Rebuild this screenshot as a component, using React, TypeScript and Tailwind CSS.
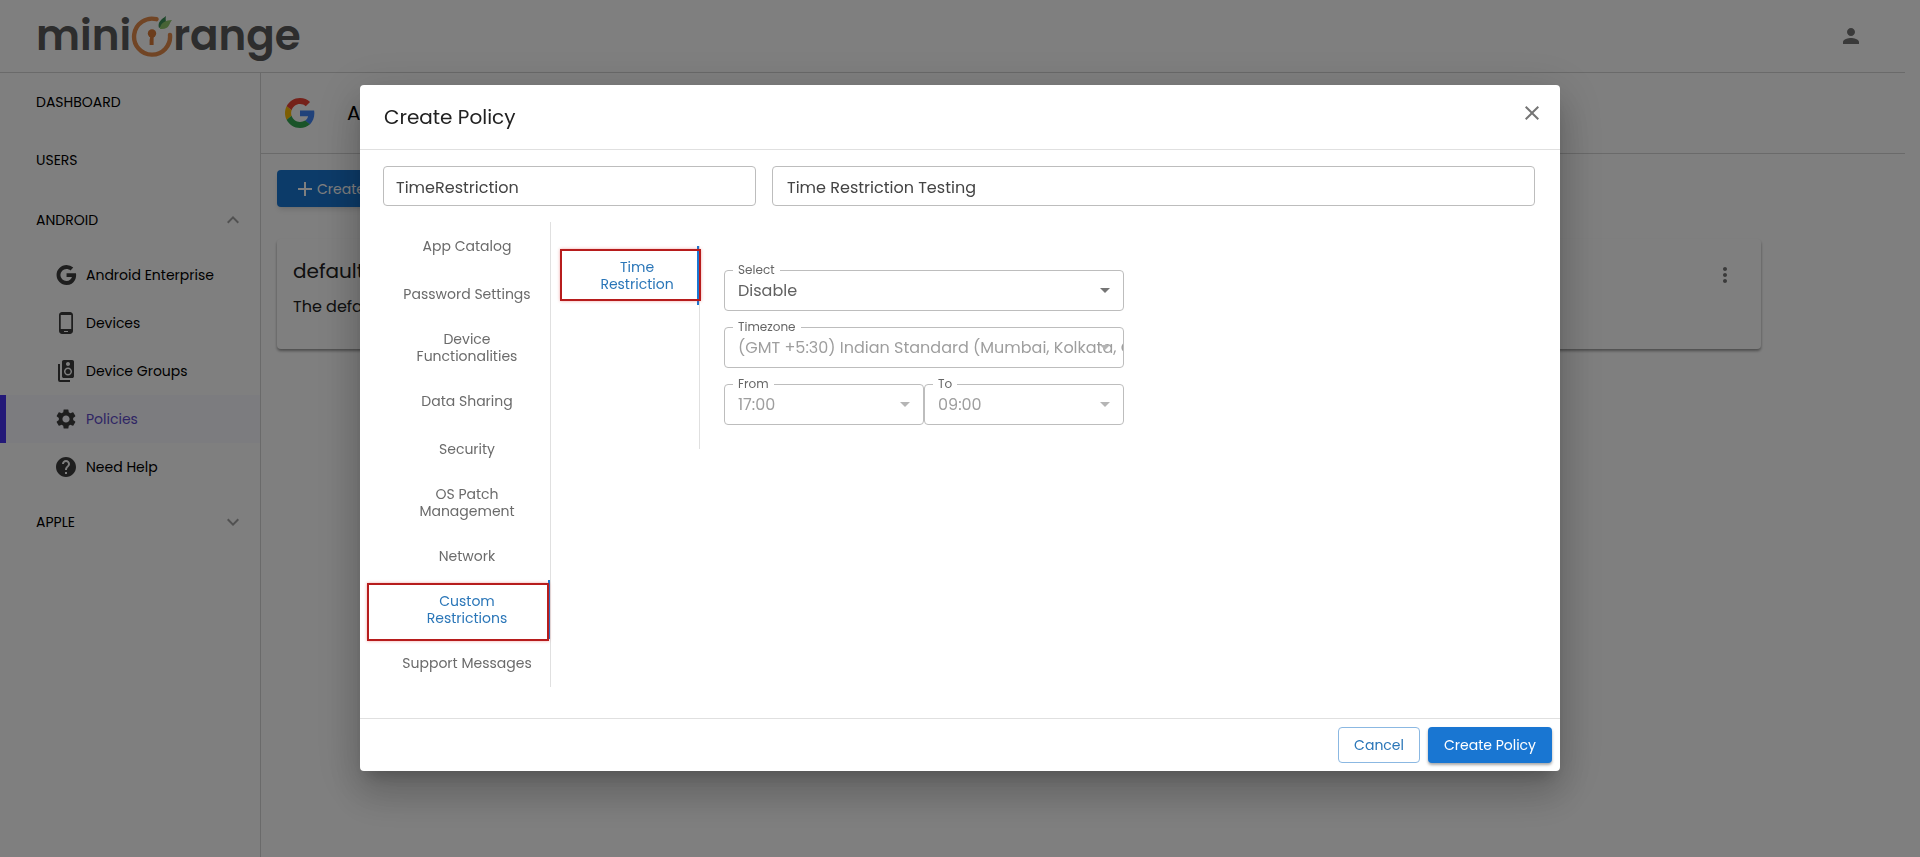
import {
  MdAdd,
  MdArrowDropDown,
  MdClose,
  MdExpandLess,
  MdExpandMore,
  MdHelp,
  MdMoreVert,
  MdPerson,
  MdPhoneAndroid,
  MdSettings,
  MdSpeakerGroup,
} from 'react-icons/md';

function GoogleIcon({ className }: { className?: string }) {
  return (
    <svg viewBox="0 0 24 24" fill="currentColor" className={className}>
      <path d="M12.545 10.239v3.821h5.445c-.712 2.315-2.647 3.972-5.445 3.972a6.033 6.033 0 1 1 0-12.064c1.498 0 2.866.549 3.921 1.453l2.814-2.814A9.969 9.969 0 0 0 12.545 2C7.021 2 2.543 6.477 2.543 12s4.478 10 10.002 10c8.396 0 10.249-7.85 9.426-11.748l-9.426-.013z" />
    </svg>
  );
}

function GoogleColorIcon({ className }: { className?: string }) {
  return (
    <svg viewBox="0 0 48 48" className={className}>
      <path fill="#EA4335" d="M24 9.5c3.54 0 6.71 1.22 9.21 3.6l6.85-6.85C35.9 2.38 30.47 0 24 0 14.62 0 6.51 5.38 2.56 13.22l7.98 6.19C12.43 13.72 17.74 9.5 24 9.5z" />
      <path fill="#4285F4" d="M46.98 24.55c0-1.57-.15-3.09-.38-4.55H24v9.02h12.94c-.58 2.96-2.26 5.48-4.78 7.18l7.73 6c4.51-4.18 7.09-10.36 7.09-17.65z" />
      <path fill="#FBBC05" d="M10.53 28.59c-.48-1.45-.76-2.99-.76-4.59s.27-3.14.76-4.59l-7.98-6.19C.92 16.46 0 20.12 0 24c0 3.88.92 7.54 2.56 10.78l7.97-6.19z" />
      <path fill="#34A853" d="M24 48c6.48 0 11.93-2.13 15.89-5.81l-7.73-6c-2.15 1.45-4.92 2.3-8.16 2.3-6.26 0-11.57-4.22-13.47-9.91l-7.98 6.19C6.51 42.62 14.62 48 24 48z" />
    </svg>
  );
}

function Logo() {
  return (
    <a href="#" aria-label="miniOrange" className="flex items-center text-[42px] leading-none font-semibold text-[#5a5a5a]">
      <span>mini</span>
      <svg viewBox="0 0 42 44" className="h-11 w-[42px]" fill="none">
        <path d="M25.500 5.200A18 18 0 1 0 39 21" stroke="#e28a4b" strokeWidth="4.4" strokeLinecap="round" />
        <circle cx="21" cy="19.500" r="4.200" fill="#d87a38" />
        <path d="M19.600 21h3v10h-4v-5z" fill="#d87a38" />
        <path d="M28 14c-2-6 3-9 7-12-1 4 1 6-1 9z" fill="#3c8f56" />
        <path d="M29 15c0-6 6-9 12-9-3 3-2 10-12 9z" fill="#8fc76a" />
      </svg>
      <span>range</span>
    </a>
  );
}

const androidItems = [
  { label: 'Android Enterprise', icon: GoogleIcon },
  { label: 'Devices', icon: MdPhoneAndroid },
  { label: 'Device Groups', icon: MdSpeakerGroup },
  { label: 'Policies', icon: MdSettings, active: true },
  { label: 'Need Help', icon: MdHelp },
];

function Sidebar() {
  return (
    <nav className="w-[261px] shrink-0 border-r border-[#d4d4d4] text-sm text-black">
      <a href="#" className="flex h-[58px] items-center px-9">DASHBOARD</a>
      <a href="#" className="flex h-[58px] items-center px-9">USERS</a>
      <button className="flex h-[62px] w-full items-center justify-between pr-[15px] pl-9">
        ANDROID
        <MdExpandLess className="h-6 w-6 text-[#a3a3a3]" />
      </button>
      {androidItems.map(({ label, icon: Icon, active }) => (
        <a
          key={label}
          href="#"
          className={
            active
              ? 'flex h-12 items-center gap-2 border-l-6 border-[#4832f0] bg-[#f8f8ff] pl-12 text-[#5f4bc9]'
              : 'flex h-12 items-center gap-2 pl-[54px]'
          }
        >
          <Icon className="h-6 w-6 text-[#3d3d3d]" />
          {label}
        </a>
      ))}
      <button className="flex h-[62px] w-full items-center justify-between pr-[15px] pl-9">
        APPLE
        <MdExpandMore className="h-6 w-6 text-[#a3a3a3]" />
      </button>
    </nav>
  );
}

function PoliciesPage() {
  return (
    <main className="flex-1">
      <div className="flex h-[81px] items-center gap-8 border-b border-[#d4d4d4] px-6">
        <GoogleColorIcon className="h-[30px] w-[30px]" />
        <h1 className="text-xl text-black">Android Enterprise</h1>
      </div>
      <div className="p-4">
        <button className="flex h-[37px] items-center rounded bg-[#1976d2] px-4 text-sm text-white shadow-md">
          <MdAdd className="h-6 w-6" />
          Create Policy
        </button>
        <div className="mt-8 mr-32 flex h-[110px] justify-between rounded bg-white p-4 text-[#212121] shadow-[0_2px_3px_rgba(0,0,0,0.4)]">
          <div>
            <h2 className="text-xl leading-8">default</h2>
            <p className="mt-1 text-base leading-8">The default policy</p>
          </div>
          <button aria-label="Policy options" className="h-10 w-10">
            <MdMoreVert className="mx-auto h-6 w-6 text-[#757575]" />
          </button>
        </div>
      </div>
    </main>
  );
}

type SelectFieldProps = {
  id: string;
  label: string;
  value: string;
  disabled?: boolean;
};

function SelectField({ id, label, value, disabled }: SelectFieldProps) {
  return (
    <div className="relative min-w-0 flex-1">
      <label htmlFor={id} className="absolute -top-2 left-[9px] bg-white px-[5px] text-xs leading-4 text-[#666666]">
        {label}
      </label>
      <select
        id={id}
        disabled={disabled}
        className="block h-[41px] w-full appearance-none rounded border border-[#bdbdbd] pl-[13px] text-base text-[#616161] opacity-100 disabled:text-[#9e9e9e]"
      >
        <option>{value}</option>
      </select>
      <MdArrowDropDown
        className={`pointer-events-none absolute top-2 right-[7px] h-6 w-6 ${disabled ? 'text-[#b5b5b5]' : 'text-[#757575]'}`}
      />
    </div>
  );
}

const tabs = [
  ['App Catalog'],
  ['Password Settings'],
  ['Device', 'Functionalities'],
  ['Data Sharing'],
  ['Security'],
  ['OS Patch', 'Management'],
  ['Network'],
  ['Custom', 'Restrictions'],
  ['Support Messages'],
];

function Tab({ lines, active }: { lines: string[]; active?: boolean }) {
  return (
    <button
      role="tab"
      aria-selected={active}
      className={`flex w-full flex-col items-center justify-center text-sm leading-[17px] whitespace-nowrap ${
        lines.length > 1 ? 'h-[59px]' : 'h-12'
      } ${active ? 'border-r-2 border-[#1976d2] pl-0.5 text-[#2a76b8]' : 'text-[#6b6b6b]'}`}
    >
      {lines.map((line) => (
        <span key={line}>{line}</span>
      ))}
    </button>
  );
}

function CreatePolicyDialog() {
  return (
    <div
      role="dialog"
      aria-labelledby="dialog-title"
      className="flex w-[1200px] max-w-full flex-col rounded bg-white shadow-[0_11px_15px_-7px_rgba(0,0,0,0.2),0_24px_38px_3px_rgba(0,0,0,0.14),0_9px_46px_8px_rgba(0,0,0,0.12)]"
    >
      <div className="flex h-[65px] items-center justify-between border-b border-[#e0e0e0] pr-4 pl-6">
        <h2 id="dialog-title" className="text-xl text-[#212121]">Create Policy</h2>
        <button aria-label="Close" className="mb-2">
          <MdClose className="h-6 w-6 text-[#757575]" />
        </button>
      </div>

      <div className="px-[23px] py-4">
        <div className="flex gap-4 pr-0.5">
          <input
            aria-label="Policy name"
            defaultValue="TimeRestriction"
            className="h-10 w-[373px] rounded border border-[#bdbdbd] px-3 pt-0.5 text-base text-[#444444]"
          />
          <input
            aria-label="Policy description"
            defaultValue="Time Restriction Testing"
            className="h-10 min-w-0 flex-1 rounded border border-[#bdbdbd] px-3.5 pt-0.5 text-base text-[#444444]"
          />
        </div>

        <div className="mt-4 flex items-start">
          <div role="tablist" className="w-[168px] border-r border-[#e0e0e0] pl-px">
            {tabs.map((lines) =>
              lines[0] === 'Custom' ? (
                <div key={lines[0]} className="relative">
                  <Tab lines={lines} active />
                  <div className="pointer-events-none absolute top-[3px] right-px -bottom-0.5 -left-[17px] border-2 border-[#b71c1c] shadow-[0_0_3px_rgba(220,38,38,0.4)]" />
                </div>
              ) : (
                <Tab key={lines[0]} lines={lines} />
              ),
            )}
          </div>

          <div role="tablist" className="mt-6 ml-6 h-[203px] w-[125px] border-r border-[#e0e0e0]">
            <div className="relative">
              <Tab lines={['Time', 'Restriction']} active />
              <div className="pointer-events-none absolute top-[3px] -right-0.5 bottom-1 -left-[15px] border-2 border-[#b71c1c] shadow-[0_0_3px_rgba(220,38,38,0.4)]" />
            </div>
          </div>

          <form className="mt-12 ml-6 flex w-[400px] flex-col gap-4">
            <SelectField id="status" label="Select" value="Disable" />
            <SelectField
              id="timezone"
              label="Timezone"
              value="(GMT +5:30) Indian Standard (Mumbai, Kolkata, Chennai)"
              disabled
            />
            <div className="flex">
              <SelectField id="from" label="From" value="17:00" disabled />
              <SelectField id="to" label="To" value="09:00" disabled />
            </div>
          </form>
        </div>
      </div>

      <div className="mt-[15px] flex justify-end gap-2 border-t border-[#e0e0e0] p-2 text-sm">
        <button className="h-9 rounded border border-[#8bb8e2] px-[15px] text-[#2a76b8]">Cancel</button>
        <button className="h-9 rounded bg-[#1976d2] px-4 text-white shadow-[0_2px_3px_rgba(0,0,0,0.35)]">
          Create Policy
        </button>
      </div>
    </div>
  );
}

export default function App() {
  return (
    <div className="min-h-screen bg-white font-[Poppins,Inter,sans-serif]">
      <div className="flex min-h-screen flex-col pr-[15px]">
        <header className="flex h-[73px] items-center justify-between border-b border-[#d4d4d4] pr-[42px] pl-9">
          <Logo />
          <button aria-label="Account">
            <MdPerson className="h-6 w-6 text-[#757575]" />
          </button>
        </header>
        <div className="flex flex-1">
          <Sidebar />
          <PoliciesPage />
        </div>
      </div>
      <div className="fixed inset-0 flex items-center justify-center bg-black/50 pb-px">
        <CreatePolicyDialog />
      </div>
    </div>
  );
}
